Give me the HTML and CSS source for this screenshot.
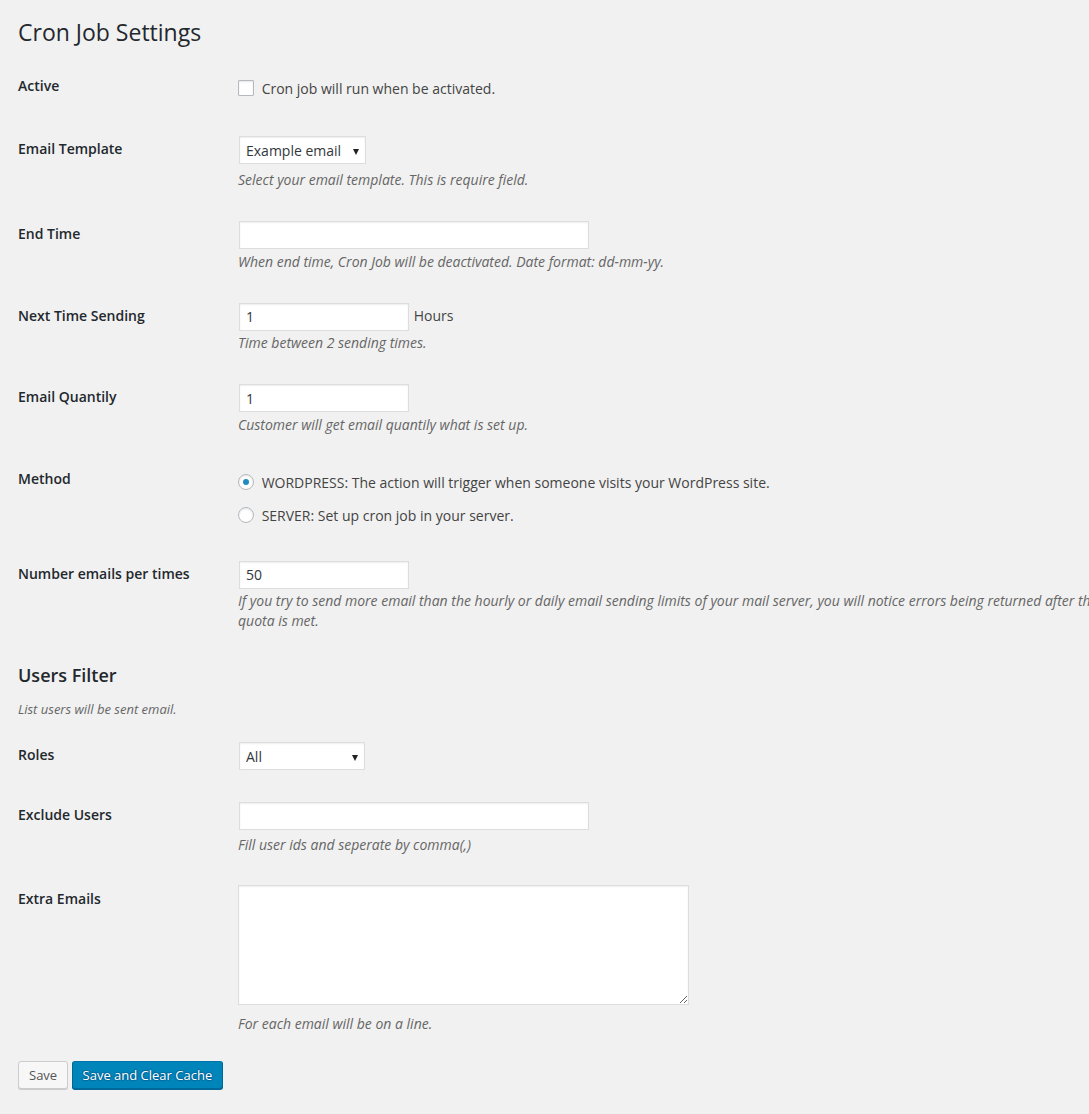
FILE: index.html
```html
<!DOCTYPE html>
<html lang="en">
<head>
    <meta charset="UTF-8">
    <title>Cron Job Settings</title>
    <link rel="stylesheet" href="styles.css">
</head>
<body>
    <div class="wrap">
        <h1>Cron Job Settings</h1>
        <form>
            <table class="form-table">
                <tr>
                    <th>Active</th>
                    <td class="td-check">
                        <label class="check-label"><input type="checkbox" class="checkbox"> Cron job will run when be activated.</label>
                    </td>
                </tr>
                <tr>
                    <th>Email Template</th>
                    <td>
                        <span class="select-wrap"><select class="field select">
                            <option>Example email</option>
                        </select></span>
                        <p class="description">Select your email template. This is require field.</p>
                    </td>
                </tr>
                <tr>
                    <th>End Time</th>
                    <td>
                        <input type="text" class="field regular-text">
                        <p class="description">When end time, Cron Job will be deactivated. Date format: dd-mm-yy.</p>
                    </td>
                </tr>
                <tr>
                    <th>Next Time Sending</th>
                    <td>
                        <input type="text" class="field short-text" value="1"> Hours
                        <p class="description">Time between 2 sending times.</p>
                    </td>
                </tr>
                <tr>
                    <th>Email Quantily</th>
                    <td>
                        <input type="text" class="field short-text" value="1">
                        <p class="description">Customer will get email quantily what is set up.</p>
                    </td>
                </tr>
                <tr>
                    <th>Method</th>
                    <td class="td-radio">
                        <label class="radio-label"><input type="radio" name="method" class="radio" checked> WORDPRESS: The action will trigger when someone visits your WordPress site.</label>
                        <label class="radio-label"><input type="radio" name="method" class="radio"> SERVER: Set up cron job in your server.</label>
                    </td>
                </tr>
                <tr>
                    <th>Number emails per times</th>
                    <td>
                        <input type="text" class="field short-text" value="50">
                        <p class="description">If you try to send more email than the hourly or daily email sending limits of your mail server, you will notice errors being returned after the quota is met.</p>
                    </td>
                </tr>
            </table>

            <h2>Users Filter</h2>
            <p class="description section-desc">List users will be sent email.</p>

            <table class="form-table filter-table">
                <tr>
                    <th>Roles</th>
                    <td>
                        <span class="select-wrap flat"><select class="field select roles">
                            <option>All</option>
                        </select></span>
                    </td>
                </tr>
                <tr>
                    <th>Exclude Users</th>
                    <td>
                        <input type="text" class="field regular-text">
                        <p class="description spaced">Fill user ids and seperate by comma(,)</p>
                    </td>
                </tr>
                <tr>
                    <th>Extra Emails</th>
                    <td>
                        <textarea class="field textarea"></textarea>
                        <p class="description after-textarea">For each email will be on a line.</p>
                    </td>
                </tr>
            </table>

            <p class="submit">
                <button type="button" class="button">Save</button>
                <button type="button" class="button button-primary">Save and Clear Cache</button>
            </p>
        </form>
    </div>
</body>
</html>
```

FILE: styles.css
```css
body {
    margin: 0;
    background: #f1f1f1;
    color: #444;
    font-family: "Open Sans", sans-serif;
    font-size: 13px;
    line-height: 1.4em;
    overflow-x: hidden;
}
.wrap { padding: 9px 0 20px 18px; }
h1 {
    font-size: 23px; font-weight: 400; color: #23282d;
    margin: 0; padding: 9px 0 4px; line-height: 29px;
}
h2 {
    font-size: 18px; font-weight: 600; color: #23282d;
    margin: 18px 0 0; line-height: 1.3;
}

/* settings table */
.form-table { border-collapse: collapse; margin-top: 6px; width: 1110px; }
.filter-table { margin-top: 7px; }
.form-table th {
    width: 200px; padding: 20px 10px 20px 0;
    text-align: left; vertical-align: top;
    line-height: 1.3; font-size: 14px; font-weight: 600; color: #23282d;
}
.form-table td {
    padding: 15px 10px; vertical-align: middle;
    line-height: 1.3; font-size: 14px;
}
.description {
    margin: 1.5px 0 0; font-size: 14px; font-style: italic;
    color: #666; line-height: 20px;
}
.section-desc { margin-top: 12px; font-size: 13px; }
.description.spaced { margin-top: 4px; }
.description.after-textarea { margin-top: 9px; }

/* inputs */
.field {
    box-sizing: border-box; height: 28px; margin: 1px;
    border: 1px solid #ddd; background: #fff; color: #32373c;
    box-shadow: inset 0 1px 2px rgba(0, 0, 0, 0.07);
    font-family: "Open Sans", sans-serif; font-size: 14px;
    padding: 3px 6px; vertical-align: middle; outline: none;
}
.regular-text { width: 350px; }
.short-text { width: 170px; }
.textarea { width: 451px; height: 120px; margin: 0; display: block; resize: both; }

.select-wrap { position: relative; display: block; width: max-content; margin: 1px 0 6px; }
.select-wrap.flat { margin: 1px 0; }
.select-wrap::after {
    content: ""; position: absolute; right: 8px; top: 13px;
    border-left: 3.5px solid transparent; border-right: 3.5px solid transparent;
    border-top: 6px solid #222; pointer-events: none;
}
.select { -webkit-appearance: none; appearance: none; width: 127px; padding: 2px 6px; margin: 0 1px; display: block; }
.roles { width: 126px; }

/* checkbox & radios */
.checkbox, .radio {
    -webkit-appearance: none; appearance: none;
    width: 16px; height: 16px; margin: 0 4px 0 0;
    border: 1px solid #b4b9be; background: #fff;
    box-shadow: inset 0 1px 2px rgba(0, 0, 0, 0.1);
    vertical-align: middle; position: relative; top: -2px;
}
.checkbox { border-radius: 1px; }
.radio { border-radius: 50%; }
.radio:checked::before {
    content: ""; position: absolute; left: 4px; top: 4px;
    width: 6px; height: 6px; border-radius: 50%; background: #1e8cbe;
}
.form-table .td-check { padding-top: 21px; padding-bottom: 20px; }
.check-label { display: inline-block; line-height: 22px; }
.radio-label { display: block; line-height: 20px; margin: 8px 0 13px; }
.radio-label:last-child { margin-bottom: 4px; }

/* buttons */
.submit { margin: 12px 0 0; padding: 0; }
.button {
    display: inline-block; height: 28px; line-height: 26px;
    padding: 0 10px 1px; font-family: "Open Sans", sans-serif; font-size: 13px;
    color: #555; background: #f7f7f7; border: 1px solid #ccc; border-radius: 3px;
    box-shadow: 0 1px 0 #ccc; vertical-align: top; cursor: pointer;
}
.button-primary {
    background: #0085ba; color: #fff;
    border-color: #0073aa #006799 #006799;
    box-shadow: 0 1px 0 #006799;
    text-shadow: 0 -1px 1px #006799, 1px 0 1px #006799, 0 1px 1px #006799, -1px 0 1px #006799;
}
```
